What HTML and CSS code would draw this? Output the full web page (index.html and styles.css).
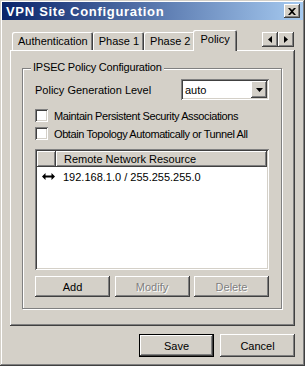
FILE: index.html
```html
<!DOCTYPE html>
<html>
<head lang="en">
    <meta charset="UTF-8">
    <title>VPN Site Configuration</title>
    <link rel="stylesheet" href="styles.css">
</head>
<body>
<div class="window">
    <div class="titlebar">
        <span class="title">VPN Site Configuration</span>
        <span class="close">
            <svg width="8" height="7" viewBox="0 0 8 7"><path d="M0 0h2l2 2 2-2h2L5 3.5 8 7H6L4 5 2 7H0l3-3.5z" fill="#000"/></svg>
        </span>
    </div>
    <div class="body">
        <div class="tabbar">
            <span class="tab">Authentication</span>
            <span class="tab">Phase 1</span>
            <span class="tab">Phase 2</span>
            <span class="tab active">Policy</span>
            <span class="spacer"></span>
            <span class="arrow"><svg width="4" height="7" viewBox="0 0 4 7"><path d="M4 0v7L0 3.5z" fill="#000"/></svg></span>
            <span class="arrow"><svg width="4" height="7" viewBox="0 0 4 7"><path d="M0 0v7l4-3.5z" fill="#000"/></svg></span>
        </div>
        <div class="panel">
            <div class="group">
                <span class="legend">IPSEC Policy Configuration</span>
                <div class="row">
                    <span class="label">Policy Generation Level</span>
                    <div class="combo">
                        <span class="value">auto</span>
                        <span class="drop"><svg width="7" height="4" viewBox="0 0 7 4"><path d="M0 0h7L3.5 4z" fill="#000"/></svg></span>
                    </div>
                </div>
                <label class="check"><span class="box"></span>Maintain Persistent Security Associations</label>
                <label class="check second"><span class="box"></span>Obtain Topology Automatically or Tunnel All</label>
                <div class="list">
                    <div class="head">
                        <span class="col-icon"></span>
                        <span class="col-name">Remote Network Resource</span>
                    </div>
                    <div class="item">
                        <svg class="both" width="13" height="7" viewBox="0 0 13 7"><path d="M0 3.5L3.5 0v2.5h6V0L13 3.5 9.5 7V4.5h-6V7z" fill="#000"/></svg>
                        <span>192.168.1.0 / 255.255.255.0</span>
                    </div>
                </div>
                <div class="actions">
                    <span class="btn">Add</span>
                    <span class="btn disabled">Modify</span>
                    <span class="btn disabled">Delete</span>
                </div>
            </div>
        </div>
        <div class="footer">
            <span class="btn default">Save</span>
            <span class="btn">Cancel</span>
        </div>
    </div>
</div>
</body>
</html>
```
FILE: styles.css
```css
*{
    margin: 0;
    padding: 0;
    box-sizing: border-box;
}
body{
    font-family: "Liberation Sans", Arial, sans-serif;
    font-size: 11px;
    color: #000;
    white-space: nowrap;
}
.window{
    width: 305px;
    height: 366px;
    background: #d4d0c8;
    padding: 2px;
    box-shadow: inset -1px -1px #404040, inset 1px 1px #d4d0c8, inset -2px -2px #808080, inset 2px 2px #fff;
}
.titlebar{
    height: 18px;
    background: linear-gradient(to right, #0a246a, #a6caf0);
    display: flex;
    align-items: center;
    padding: 0 3px 0 4px;
}
.title{
    flex: 1;
    color: #fff;
    font-weight: bold;
    font-size: 13px;
    letter-spacing: 0.7px;
}
.close{
    width: 16px;
    height: 14px;
    background: #d4d0c8;
    display: flex;
    align-items: center;
    justify-content: center;
    box-shadow: inset -1px -1px #404040, inset 1px 1px #fff, inset -2px -2px #808080;
}
.body{
    padding: 10px 8px 0 8px;
}
.tabbar{
    height: 20px;
    display: flex;
    align-items: flex-end;
    padding-left: 2px;
}
.tab{
    height: 18px;
    padding: 0 5px 0 6px;
    line-height: 18px;
    box-shadow: inset 1px 1px #fff, inset -1px 0 #404040, inset -2px 0 #808080;
    border-radius: 2px 2px 0 0;
}
.tab.active{
    margin: 0 -2px;
    padding: 0 7px;
    position: relative;
    background: #d4d0c8;
    z-index: 1;
    height: 21px;
    line-height: 18px;
    margin-bottom: -1px;
}
.spacer{
    flex: 1;
}
.arrow{
    width: 16px;
    height: 15px;
    align-self: flex-start;
    margin-top: 2px;
    display: flex;
    align-items: center;
    justify-content: center;
    box-shadow: inset -1px -1px #404040, inset 1px 1px #fff, inset -2px -2px #808080;
}
.arrow:last-child{
    margin-right: 1px;
}
.panel{
    height: 276px;
    padding: 18px 13px 17px 12px;
    box-shadow: inset -1px -1px #404040, inset 1px 1px #fff, inset -2px -2px #808080;
}
.group{
    height: 100%;
    position: relative;
    border: 1px solid #808080;
    box-shadow: inset 1px 1px #fff, 1px 1px #fff;
    padding: 10px 12px 0 12px;
}
.legend{
    position: absolute;
    top: -8px;
    left: 8px;
    padding: 0 2px;
    background: #d4d0c8;
    letter-spacing: -0.2px;
}
.row{
    display: flex;
    align-items: center;
    justify-content: space-between;
    height: 21px;
}
.combo{
    width: 88px;
    height: 21px;
    background: #fff;
    display: flex;
    align-items: center;
    padding: 2px;
    box-shadow: inset 1px 1px #808080, inset -1px -1px #fff, inset 2px 2px #404040, inset -2px -2px #d4d0c8;
}
.value{
    flex: 1;
    padding-left: 2px;
}
.drop{
    width: 16px;
    height: 17px;
    background: #d4d0c8;
    display: flex;
    align-items: center;
    justify-content: center;
    box-shadow: inset -1px -1px #404040, inset 1px 1px #fff, inset -2px -2px #808080;
}
.check{
    display: flex;
    align-items: center;
    height: 13px;
    margin-top: 9px;
    letter-spacing: -0.4px;
}
.check.second{
    margin-top: 5px;
}
.box{
    width: 13px;
    height: 13px;
    margin-right: 6px;
    background: #fff;
    box-shadow: inset 1px 1px #808080, inset -1px -1px #fff, inset 2px 2px #404040, inset -2px -2px #d4d0c8;
}
.list{
    margin-top: 9px;
    height: 121px;
    background: #fff;
    padding: 2px;
    box-shadow: inset 1px 1px #808080, inset -1px -1px #fff, inset 2px 2px #404040, inset -2px -2px #d4d0c8;
}
.head{
    display: flex;
    height: 16px;
}
.head span{
    background: #d4d0c8;
    line-height: 16px;
    box-shadow: inset -1px -1px #404040, inset 1px 1px #fff, inset -2px -2px #808080;
}
.col-icon{
    width: 19px;
}
.col-name{
    flex: 1;
    padding-left: 8px;
}
.item{
    display: flex;
    align-items: center;
    height: 19px;
    padding-left: 5px;
}
.both{
    margin-right: 8px;
}
.actions{
    display: flex;
    justify-content: space-between;
    margin-top: 6px;
}
.btn{
    width: 75px;
    height: 21px;
    display: flex;
    align-items: center;
    justify-content: center;
    box-shadow: inset -1px -1px #404040, inset 1px 1px #fff, inset -2px -2px #808080;
}
.btn.disabled{
    color: #808080;
    text-shadow: 1px 1px #fff;
}
.footer{
    display: flex;
    justify-content: flex-end;
    gap: 6px;
    margin-top: 8px;
}
.footer .btn{
    height: 23px;
}
.btn.default{
    box-shadow: inset 0 0 0 1px #000, inset -2px -2px #404040, inset 2px 2px #fff, inset -3px -3px #808080;
}
```
